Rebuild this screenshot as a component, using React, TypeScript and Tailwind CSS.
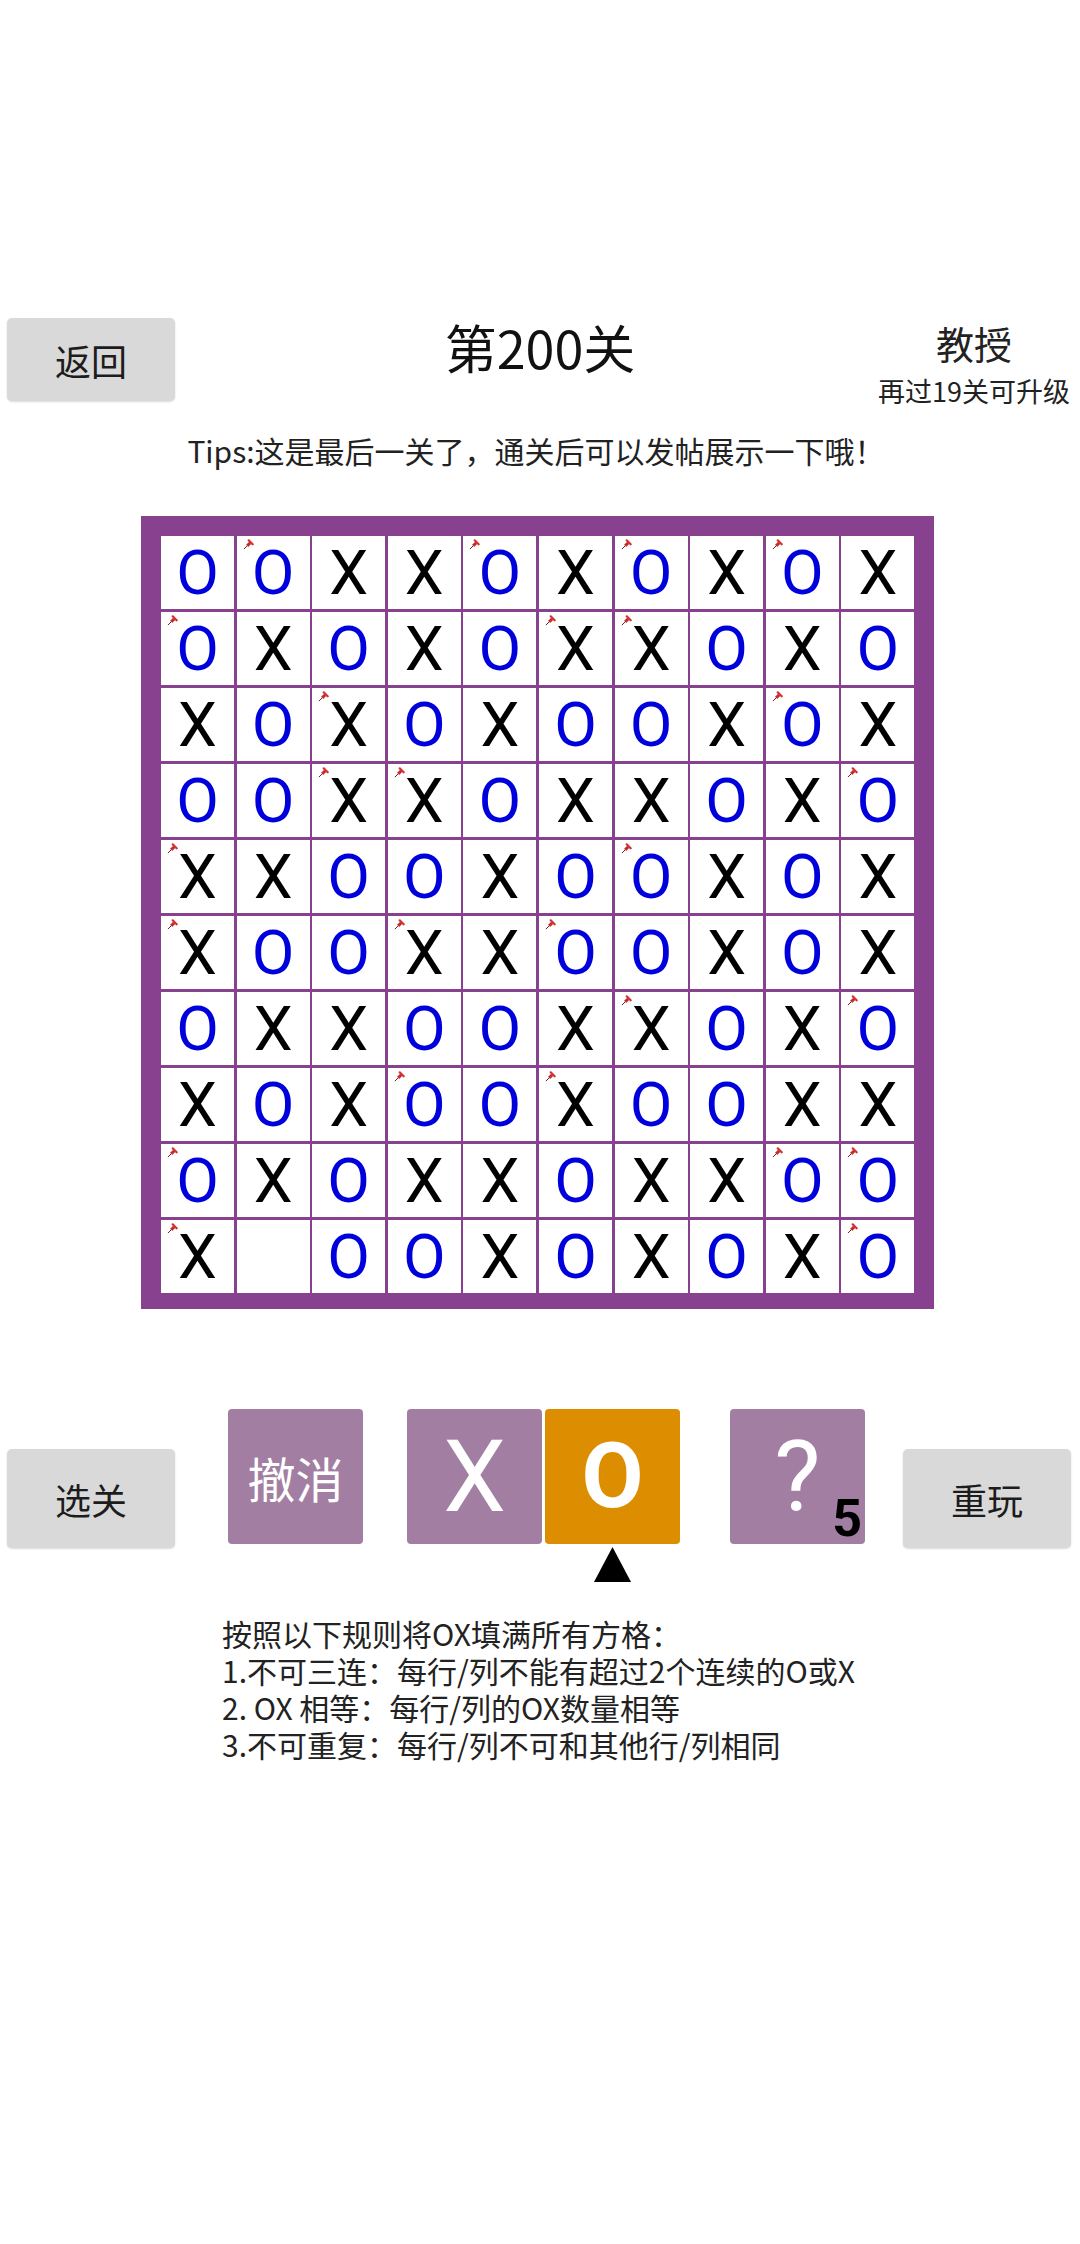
import React from "react";

const CJK = { fontFamily: '"Noto Sans CJK SC", "Noto Sans", sans-serif' };
const ROBOTO = { fontFamily: 'Roboto, "Noto Sans", sans-serif' };

const ROWS = [
  "O 'O X X 'O X 'O X 'O X",
  "'O X O X O 'X 'X O X O",
  "X O 'X O X O O X 'O X",
  "O O 'X 'X O X X O X 'O",
  "'X X O O X O 'O X O X",
  "'X O O 'X X 'O O X O X",
  "O X X O O X 'X O X 'O",
  "X O X 'O O 'X O O X X",
  "'O X O X X O X X 'O 'O",
  "'X _ O O X O X O X 'O",
];

function Pin() {
  return (
    <svg
      className="absolute left-[6px] top-[3px] w-[11px] h-[11px]"
      viewBox="0 0 10 10"
    >
      <line x1="0.8" y1="9.2" x2="4" y2="6" stroke="#7a1b1b" strokeWidth="0.9" />
      <path d="M2.8 5.2 L4.8 7.2 L7.6 4.4 L5.6 2.4 Z" fill="#c62a2a" />
      <path d="M5.2 1.2 L8.8 4.8" stroke="#d33232" strokeWidth="2" strokeLinecap="round" />
    </svg>
  );
}

function Cell({ v }: { v: string }) {
  const pinned = v.startsWith("'");
  const ch = v.replace("'", "");
  return (
    <div className="relative bg-white w-[73px] h-[73px] flex items-center justify-center">
      {pinned && <Pin />}
      {ch !== "_" && (
        <span
          style={ROBOTO}
          className={
            "text-[62px] leading-none " +
            (ch === "O" ? "text-[#0000dc]" : "text-black")
          }
        >
          {ch}
        </span>
      )}
    </div>
  );
}

export default function App() {
  const cells = ROWS.flatMap((r) => r.split(" "));
  return (
    <div className="w-[1080px] min-h-[2244px] bg-white flex flex-col" style={CJK}>
      {/* Header */}
      <div className="mt-[318px] grid grid-cols-[1fr_auto_1fr] h-[90px]">
        <div className="flex items-start">
          <button className="ml-[7px] w-[168px] h-[83px] rounded-[5px] bg-[#d9d9d9] text-[36px] text-[#1c1c1c] flex items-center justify-center shadow-[0_1px_2px_rgba(0,0,0,0.15)]">
            返回
          </button>
        </div>
        <div className="text-[52px] leading-[60px] text-[#111] -mt-[1px]">第200关</div>
        <div className="flex justify-end">
          <div className="mr-[10px] flex flex-col items-center">
            <div className="mt-[3px] text-[38px] leading-[44px] text-[#222]">教授</div>
            <div className="mt-[9px] text-[27px] leading-[34px] text-[#222]">
              再过19关可升级
            </div>
          </div>
        </div>
      </div>

      {/* Tips */}
      <div className="mt-[24px] h-[36px] flex justify-center">
        <div className="ml-[-8px] text-[30px] leading-[36px] text-[#222]">
          Tips:这是最后一关了，通关后可以发帖展示一下哦！
        </div>
      </div>

      {/* Board */}
      <div className="mt-[48px] ml-[141px] w-[793px] h-[793px] bg-[#88418e] p-[18px]">
        <div className="grid grid-cols-10 gap-[3px] bg-[#88418e] p-[2px] w-[757px]">
          {cells.map((v, i) => (
            <Cell key={i} v={v} />
          ))}
        </div>
      </div>

      {/* Controls */}
      <div className="mt-[100px] flex items-start pl-[7px]">
        <button className="mt-[40px] w-[168px] h-[99px] rounded-[5px] bg-[#d9d9d9] text-[36px] text-[#1c1c1c] flex items-center justify-center shadow-[0_1px_2px_rgba(0,0,0,0.15)]">
          选关
        </button>
        <button className="ml-[53px] w-[135px] h-[135px] rounded-[4px] bg-[#a27fa2] text-white text-[48px] flex items-center justify-center">
          撤消
        </button>
        <div className="ml-[44px] flex items-start">
          <button
            style={ROBOTO}
            className="w-[135px] h-[135px] rounded-[4px] bg-[#a27fa2] text-white text-[100px] leading-none flex items-center justify-center"
          >
            X
          </button>
          <div className="ml-[3px] flex flex-col items-center">
            <button
              style={ROBOTO}
              className="w-[135px] h-[135px] rounded-[4px] bg-[#dd8e00] text-white text-[90px] font-bold leading-none flex items-center justify-center"
            >
              O
            </button>
            <svg className="mt-[3px] w-[37px] h-[35px]" viewBox="0 0 37 35">
              <path d="M18.5 0 L37 35 L0 35 Z" fill="#000" />
            </svg>
          </div>
        </div>
        <div className="ml-[50px] relative w-[135px] h-[135px] rounded-[4px] bg-[#a27fa2] flex items-center justify-center">
          <span style={ROBOTO} className="text-white text-[98px] leading-none">?</span>
          <span
            style={ROBOTO}
            className="absolute right-[3px] bottom-[-1px] text-[52px] font-bold leading-none text-black"
          >
            5
          </span>
        </div>
        <button className="ml-[38px] mt-[40px] w-[168px] h-[99px] rounded-[5px] bg-[#d9d9d9] text-[36px] text-[#1c1c1c] flex items-center justify-center shadow-[0_1px_2px_rgba(0,0,0,0.15)]">
          重玩
        </button>
      </div>

      {/* Rules */}
      <div className="mt-[33px] ml-[222px] text-[30px] leading-[37px] text-[#222]">
        <div>按照以下规则将OX填满所有方格：</div>
        <div>1.不可三连：每行/列不能有超过2个连续的O或X</div>
        <div>2. OX 相等：每行/列的OX数量相等</div>
        <div>3.不可重复：每行/列不可和其他行/列相同</div>
      </div>
    </div>
  );
}
